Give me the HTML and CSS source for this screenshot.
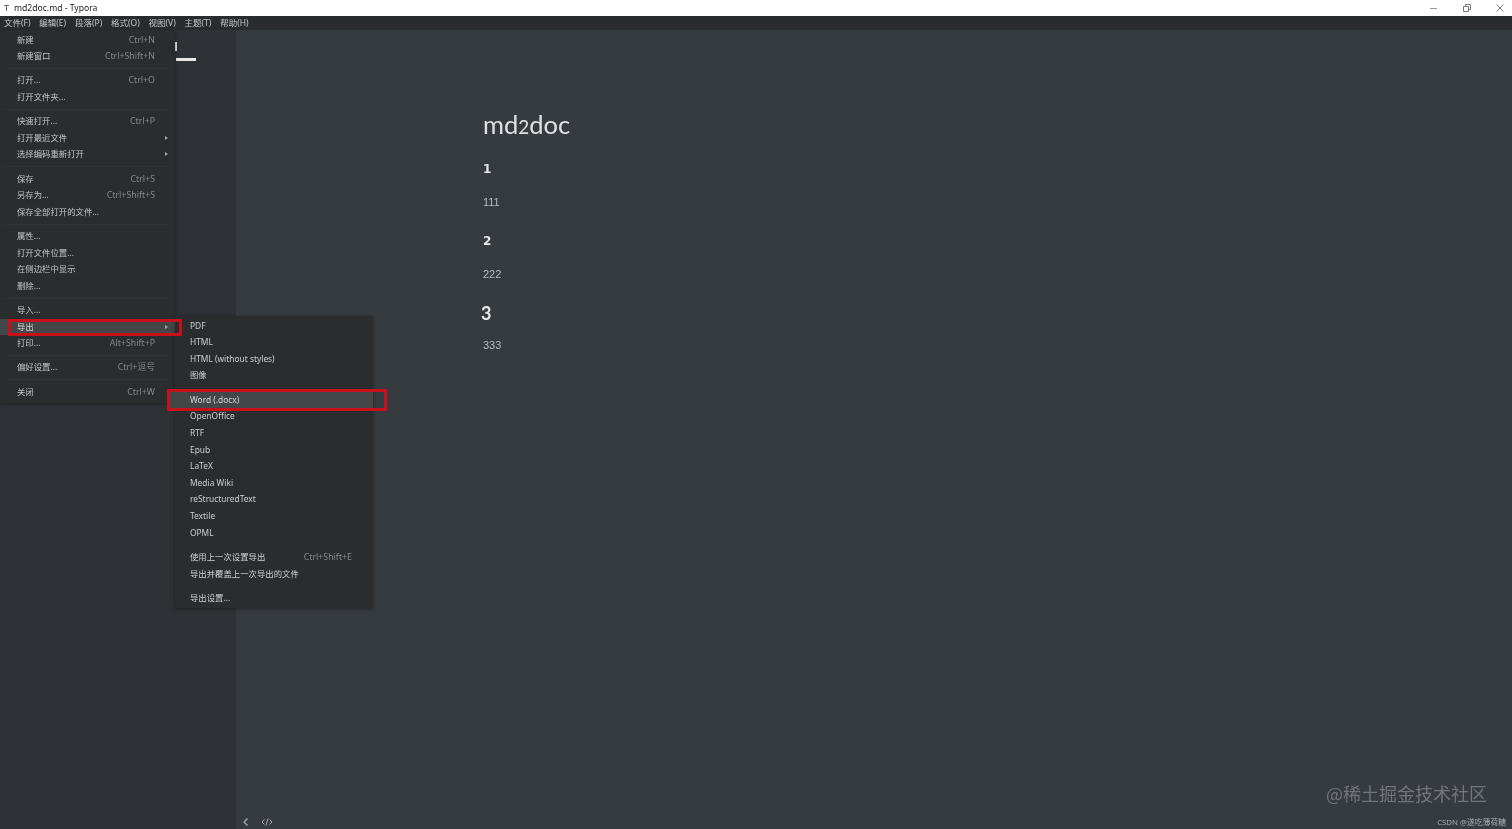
FILE: index.html
```html
<!DOCTYPE html>
<html lang="zh-CN">
<head>
<meta charset="utf-8">
<title>md2doc.md - Typora</title>
<link rel="stylesheet" href="styles.css">
</head>
<body>
<div class="app">
  <header class="titlebar">
    <span class="app-icon">T</span>
    <span class="title-text">md2doc.md - Typora</span>
    <div class="win-controls">
      <svg width="8" height="8" viewBox="0 0 8 8"><path d="M0 4.5H7" stroke="#9a9a9a" fill="none"/></svg>
      <svg width="8" height="8" viewBox="0 0 8 8"><path d="M0.5 2.5H5.5V7.5H0.5ZM2.5 2.5V0.5H7.5V5.5H5.5" stroke="#777" fill="none"/></svg>
      <svg width="8" height="8" viewBox="0 0 8 8"><path d="M0.5 0.5L7.5 7.5M7.5 0.5L0.5 7.5" stroke="#777" fill="none"/></svg>
    </div>
  </header>
  <nav class="menubar">
    <span>文件(F)</span><span>编辑(E)</span><span>段落(P)</span><span>格式(O)</span><span>视图(V)</span><span>主题(T)</span><span>帮助(H)</span>
  </nav>
  <div class="workspace">
    <aside class="sidebar">
      <i class="mark-caret"></i>
      <i class="mark-tab"></i>
    </aside>
    <main class="editor">
      <article class="doc">
        <h1>md<span class="onum">2</span>doc</h1>
        <h3>1</h3>
        <p>111</p>
        <h3>2</h3>
        <p>222</p>
        <h2>3</h2>
        <p>333</p>
      </article>
      <footer class="editor-foot">
        <svg width="8" height="10" viewBox="0 0 8 10"><path d="M5.5 1.5L2 5L5.5 8.5" stroke="#a4a8ac" stroke-width="1.3" fill="none"/></svg>
        <svg width="12" height="10" viewBox="0 0 12 10"><path d="M3.5 2.5L1 5L3.5 7.5M8.5 2.5L11 5L8.5 7.5M7 1.5L5 8.5" stroke="#a4a8ac" fill="none"/></svg>
      </footer>
      <div class="watermark">@稀土掘金技术社区</div>
      <div class="credit">CSDN @遂吃薄荷糖</div>
    </main>
  </div>

  <div class="menu">
    <div class="item"><span>新建</span><span class="key">Ctrl+N</span></div>
    <div class="item"><span>新建窗口</span><span class="key">Ctrl+Shift+N</span></div>
    <div class="sep"></div>
    <div class="item"><span>打开...</span><span class="key">Ctrl+O</span></div>
    <div class="item"><span>打开文件夹...</span></div>
    <div class="sep"></div>
    <div class="item"><span>快速打开...</span><span class="key">Ctrl+P</span></div>
    <div class="item has-sub"><span>打开最近文件</span></div>
    <div class="item has-sub"><span>选择编码重新打开</span></div>
    <div class="sep"></div>
    <div class="item"><span>保存</span><span class="key">Ctrl+S</span></div>
    <div class="item"><span>另存为...</span><span class="key">Ctrl+Shift+S</span></div>
    <div class="item"><span>保存全部打开的文件...</span></div>
    <div class="sep"></div>
    <div class="item"><span>属性...</span></div>
    <div class="item"><span>打开文件位置...</span></div>
    <div class="item"><span>在侧边栏中显示</span></div>
    <div class="item"><span>删除...</span></div>
    <div class="sep"></div>
    <div class="item"><span>导入...</span></div>
    <div class="item has-sub active flagged-export"><span>导出</span></div>
    <div class="item"><span>打印...</span><span class="key">Alt+Shift+P</span></div>
    <div class="sep"></div>
    <div class="item"><span>偏好设置...</span><span class="key">Ctrl+逗号</span></div>
    <div class="sep"></div>
    <div class="item"><span>关闭</span><span class="key">Ctrl+W</span></div>

    <div class="submenu">
      <div class="item"><span>PDF</span></div>
      <div class="item"><span>HTML</span></div>
      <div class="item"><span>HTML (without styles)</span></div>
      <div class="item"><span>图像</span></div>
      <div class="sep"></div>
      <div class="item active flagged-word"><span>Word (.docx)</span></div>
      <div class="item"><span>OpenOffice</span></div>
      <div class="item"><span>RTF</span></div>
      <div class="item"><span>Epub</span></div>
      <div class="item"><span>LaTeX</span></div>
      <div class="item"><span>Media Wiki</span></div>
      <div class="item"><span>reStructuredText</span></div>
      <div class="item"><span>Textile</span></div>
      <div class="item"><span>OPML</span></div>
      <div class="sep"></div>
      <div class="item"><span>使用上一次设置导出</span><span class="key">Ctrl+Shift+E</span></div>
      <div class="item"><span>导出并覆盖上一次导出的文件</span></div>
      <div class="sep"></div>
      <div class="item"><span>导出设置...</span></div>
    </div>
  </div>
</div>
</body>
</html>
```
FILE: styles.css
```css
* { box-sizing: border-box; }
html, body { margin: 0; height: 100%; overflow: hidden; }
body {
  font-family: "Noto Sans", "Noto Sans CJK SC", sans-serif;
  background: #363b40;
}
.app {
  position: relative;
  width: 1512px;
  height: 829px;
  display: flex;
  flex-direction: column;
  filter: blur(0.35px);
}
.titlebar {
  height: 16px;
  flex: none;
  background: #fff;
  display: flex;
  align-items: center;
  padding: 0 0 0 4px;
  color: #222;
  font-size: 8.6px;
  line-height: 15px;
}
.app-icon {
  width: 7px;
  margin-right: 3px;
  color: #444;
  font: 8.5px "Liberation Sans", sans-serif;
}
.win-controls {
  margin-left: auto;
  display: flex;
  gap: 25px;
  padding-right: 8px;
}
.menubar {
  height: 14px;
  flex: none;
  background: #292b2e;
  display: flex;
  gap: 8.8px;
  padding-left: 4px;
  color: #c4c7ca;
  font-size: 8.5px;
  line-height: 14px;
}
.workspace { flex: 1; display: flex; min-height: 0; }
.sidebar {
  position: relative;
  width: 236px;
  flex: none;
  background: #2e3135;
}
.mark-caret {
  position: absolute;
  left: 175px;
  top: 12px;
  width: 1.5px;
  height: 9px;
  background: #d8d8d8;
}
.mark-tab {
  position: absolute;
  left: 176px;
  top: 28px;
  width: 20px;
  height: 2.5px;
  background: #e6e6e6;
}
.editor {
  position: relative;
  flex: 1;
  background: #363b40;
  display: flex;
  flex-direction: column;
}
.doc {
  flex: 1;
  padding: 77px 0 0 247px;
  color: #b8bfc6;
  font-family: "Lato", "Noto Sans", sans-serif;
}
.doc h1 {
  margin: 0 0 15px;
  font-size: 25.5px;
  line-height: 34px;
  font-weight: 400;
  color: #dfe2e5;
}
.onum { font-size: .74em; }
.doc h3 {
  margin: 0 0 15px;
  font: 700 12px/20px "DejaVu Sans", sans-serif;
  color: #e6e8ea;
}
.doc p + h3 { margin-top: 21px; }
.doc h2 {
  margin: 0 0 13px;
  font: 700 18px/22px "Lato", sans-serif;
  color: #e6e8ea;
  text-indent: -2px;
}
.doc p {
  margin: 0 0 20px;
  font: 11px/16px "Liberation Sans", sans-serif;
  color: #b4bbc2;
}
.editor-foot {
  height: 14px;
  flex: none;
  display: flex;
  align-items: center;
  gap: 11px;
  padding: 0 0 1px 6px;
}
.watermark {
  position: absolute;
  right: 25px;
  bottom: 24px;
  font: 18px/24px "Noto Sans CJK SC", sans-serif;
  color: #72767b;
}
.credit {
  position: absolute;
  right: 6px;
  bottom: 2px;
  font: 7.8px/10px "Noto Sans", "Noto Sans CJK SC", sans-serif;
  color: #a8adb2;
}
.menu {
  position: absolute;
  left: 0;
  top: 30px;
  width: 175px;
  height: 373px;
  padding-top: 1.6px;
  background: #2a2c2e;
  box-shadow: 0 1px 3px rgba(0,0,0,.35);
  font-size: 8.4px;
  color: #c2c5c8;
}
.item {
  position: relative;
  height: 16.55px;
  line-height: 16.55px;
  padding: 0 20px 0 17px;
  display: flex;
  justify-content: space-between;
  white-space: nowrap;
}
.key { color: #85898d; font-size: 8.8px; }
.sep {
  height: 7.75px;
  margin: 0 4px;
  position: relative;
}
.sep::after {
  content: "";
  position: absolute;
  left: 0;
  right: 0;
  top: 3.5px;
  height: 1px;
  background: #2f3134;
}
.has-sub::after {
  content: "";
  position: absolute;
  left: 165px;
  top: 6px;
  border-left: 3.5px solid #a0a3a6;
  border-top: 2.5px solid transparent;
  border-bottom: 2.5px solid transparent;
}
.active { background: #444648; color: #d4d6d8; }
.flagged-export::before,
.flagged-word::before {
  content: "";
  position: absolute;
  z-index: 3;
  border: 3px solid #c8101c;
  pointer-events: none;
}
.flagged-export::before { left: 8px; right: -7px; top: 0; bottom: -1px; }
.submenu {
  position: absolute;
  z-index: 2;
  left: 175px;
  top: 286px;
  width: 198px;
  height: 292px;
  padding-top: 1.6px;
  background: #2a2c2e;
  box-shadow: 0 1px 4px rgba(0,0,0,.4);
  font-size: 8.4px;
  color: #cdd0d3;
}
.submenu .item { height: 16.6px; line-height: 16.6px; padding: 0 21px 0 15px; }
.submenu .key { font-size: 8.8px; }
.submenu .sep { height: 7.8px; }
.submenu .sep::after { display: none; }
.flagged-word { box-shadow: -6px 0 0 #444648; }
.flagged-word::before { left: -8px; right: -14px; top: -2.5px; bottom: -3px; }
```
